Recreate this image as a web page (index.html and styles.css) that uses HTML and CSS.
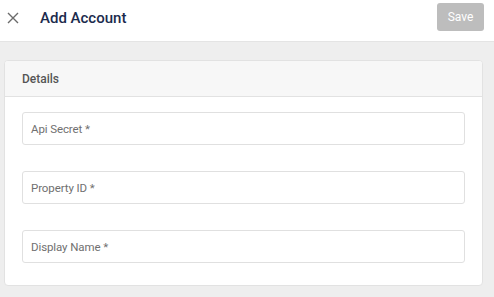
FILE: index.html
```html
<!DOCTYPE html>
<html>
<head>
<meta charset="utf-8">
<link rel="stylesheet" href="styles.css">
</head>
<body>
<header class="topbar">
  <button class="close" aria-label="Close">
    <svg width="12" height="12" viewBox="0 0 12 12"><path d="M1 1L11 11M11 1L1 11" stroke="#6b6b6b" stroke-width="1.4" fill="none"/></svg>
  </button>
  <h1 class="title">Add Account</h1>
  <button class="save">Save</button>
</header>
<main class="content">
  <section class="card">
    <div class="card-head">Details</div>
    <div class="card-body">
      <div class="field">Api Secret *</div>
      <div class="field">Property ID *</div>
      <div class="field">Display Name *</div>
    </div>
  </section>
</main>
</body>
</html>
```
FILE: styles.css
```css
* { box-sizing: border-box; }
html, body { margin: 0; padding: 0; }
body {
  width: 494px;
  height: 297px;
  overflow: hidden;
  background: #eeeeee;
  font-family: Roboto, "Noto Sans", Arial, sans-serif;
}
.topbar {
  height: 42px;
  background: #ffffff;
  display: flex;
  align-items: center;
  padding: 0 10px 0 6px;
  border-bottom: 1px solid #e4e4e4;
}
.close {
  width: 13px;
  height: 13px;
  padding: 0;
  border: 0;
  background: none;
  display: flex;
  align-items: center;
  justify-content: center;
  margin-top: -5px;
}
.title {
  margin: -5px 0 0 21px;
  font-size: 15px;
  font-weight: 500;
  color: #1b2b4d;
  flex: 1;
}
.save {
  width: 47px;
  height: 28px;
  border: 0;
  border-radius: 3px;
  background: #bdbdbd;
  color: #ffffff;
  font-family: Roboto, Arial, sans-serif;
  font-size: 12px;
  padding: 0;
  margin-top: -7px;
}
.content {
  padding: 18px 11px 0 4px;
}
.card {
  background: #ffffff;
  border: 1px solid #e2e2e2;
  border-radius: 4px;
  overflow: hidden;
  height: 226px;
}
.card-head {
  height: 36px;
  background: #f7f7f7;
  border-bottom: 1px solid #e2e2e2;
  padding-left: 17px;
  display: flex;
  align-items: center;
  font-size: 12px;
  font-weight: 500;
  color: #555555;
}
.card-body {
  padding: 15px 17px 0 17px;
  display: flex;
  flex-direction: column;
  gap: 26px;
}
.field {
  height: 33px;
  border: 1px solid #e0e0e0;
  border-radius: 3px;
  padding-left: 8px;
  display: flex;
  align-items: center;
  font-size: 11.5px;
  letter-spacing: -0.1px;
  color: #707070;
}
```
